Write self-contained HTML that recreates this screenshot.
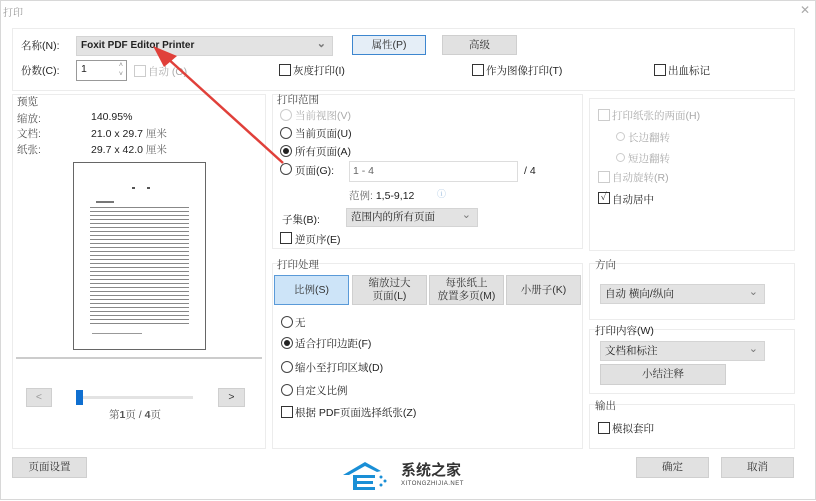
<!DOCTYPE html>
<html><head><meta charset="utf-8"><style>
*{margin:0;padding:0;box-sizing:border-box}
body{width:816px;height:500px;background:#fff;font-family:"Liberation Sans","Noto Serif CJK SC","Noto Sans CJK SC",sans-serif;font-size:10.5px;color:#222;position:relative;overflow:hidden;border:1px solid #d8d8d8}
.a{position:absolute;white-space:nowrap}
.p{position:absolute;border:1px solid #ececec;background:#fff}
.t{position:absolute;color:#444;font-size:10.5px}
.btn{position:absolute;background:#e1e1e1;border:1px solid #cfcfcf;text-align:center;color:#333}
.dd{position:absolute;background:#e3e3e3;border:1px solid #d4d4d4;padding-left:4px;color:#222}
.dd:after{content:"⌄";position:absolute;right:6px;top:-2px;color:#777;font-size:11px}
.cb{position:absolute;width:12px;height:12px;border:1px solid #333;background:#fff}
.rd{position:absolute;width:12px;height:12px;border:1px solid #444;border-radius:50%;background:#fff}
.rd.on:after{content:"";position:absolute;left:2px;top:2px;width:6px;height:6px;border-radius:50%;background:#222}
.dis{color:#b5b5b5;border-color:#ccc}
</style></head><body>
<div class="a" style="left:2px;top:3px;color:#999;font-size:10px">打印</div>
<div class="a" style="left:799px;top:2px;color:#aaa;font-size:12px">✕</div>

<div class="p" style="left:11px;top:27px;width:783px;height:63px"></div>
<div class="a" style="left:20px;top:37px">名称(N):</div>
<div class="dd" style="left:75px;top:35px;width:257px;height:20px;line-height:18px;font-weight:bold;font-size:10px">Foxit PDF Editor Printer</div>
<div class="btn" style="left:351px;top:34px;width:74px;height:20px;line-height:18px;border:1px solid #3d86cf;background:#e5eef7">属性(P)</div>
<div class="btn" style="left:441px;top:34px;width:75px;height:20px;line-height:18px">高级</div>
<div class="a" style="left:20px;top:62px">份数(C):</div>
<div class="a" style="left:75px;top:59px;width:51px;height:21px;border:1px solid #999;padding:2px 4px">1<span style="position:absolute;right:3px;top:0;font-size:7px;color:#888;line-height:9px">˄<br>˅</span></div>
<div class="cb dis" style="left:133px;top:64px"></div>
<div class="a" style="left:147px;top:63px;color:#aaa">自动   (O)</div>
<div class="cb" style="left:278px;top:63px"></div><div class="a" style="left:292px;top:62px">灰度打印(I)</div>
<div class="cb" style="left:471px;top:63px"></div><div class="a" style="left:485px;top:62px">作为图像打印(T)</div>
<div class="cb" style="left:653px;top:63px"></div><div class="a" style="left:667px;top:62px">出血标记</div>

<div class="p" style="left:11px;top:93px;width:254px;height:355px"></div>
<div class="t a" style="left:16px;top:93px">预览</div>
<div class="a" style="left:16px;top:110px;color:#555">缩放:</div><div class="a" style="left:90px;top:110px">140.95%</div>
<div class="a" style="left:16px;top:125px;color:#555">文档:</div><div class="a" style="left:90px;top:125px">21.0 x 29.7 <span style="color:#666">厘米</span></div>
<div class="a" style="left:16px;top:141px;color:#555">纸张:</div><div class="a" style="left:90px;top:141px">29.7 x 42.0 <span style="color:#666">厘米</span></div>
<div class="a" style="left:72px;top:161px;width:133px;height:188px;border:1px solid #666;background:#fff">
 <div class="a" style="left:58px;top:24px;width:18px;height:2px;border-left:3px solid #555;border-right:3px solid #555"></div>
 <div class="a" style="left:22px;top:38px;width:18px;height:2px;background:#777"></div>
 <div class="a" style="left:16px;top:44px;width:99px;height:118px;background:repeating-linear-gradient(#888 0 1.2px,#fff 1.2px 4px)"></div>
 <div class="a" style="left:18px;top:170px;width:50px;height:1px;background:#999"></div>
</div>
<div class="a" style="left:15px;top:356px;width:246px;height:2px;background:#ccc"></div>
<div class="btn" style="left:25px;top:387px;width:26px;height:19px;line-height:17px;color:#999">&lt;</div>
<div class="a" style="left:78px;top:395px;width:114px;height:3px;background:#e3e3e3"></div>
<div class="a" style="left:75px;top:389px;width:7px;height:15px;background:#0f6fd0"></div>
<div class="btn" style="left:217px;top:387px;width:27px;height:19px;line-height:17px">&gt;</div>
<div class="a" style="left:108px;top:406px;color:#555">第<b>1</b>页 / <b>4</b>页</div>

<div class="p" style="left:271px;top:93px;width:311px;height:155px"></div>
<div class="t a" style="left:276px;top:91px">打印范围</div>
<div class="rd dis" style="left:279px;top:108px"></div><div class="a" style="left:294px;top:107px;color:#aaa">当前视图(V)</div>
<div class="rd" style="left:279px;top:126px"></div><div class="a" style="left:294px;top:125px">当前页面(U)</div>
<div class="rd on" style="left:279px;top:144px"></div><div class="a" style="left:294px;top:143px">所有页面(A)</div>
<div class="rd" style="left:279px;top:162px"></div><div class="a" style="left:294px;top:162px">页面(G):</div>
<div class="a" style="left:348px;top:160px;width:169px;height:21px;border:1px solid #ddd;padding:3px 3px;color:#666">1 - 4</div>
<div class="a" style="left:523px;top:164px">/ 4</div>
<div class="a" style="left:348px;top:187px"><span style="color:#666">范例:</span> 1,5-9,12</div>
<div class="a" style="left:436px;top:186px;color:#9bd;font-size:9px">ⓘ</div>
<div class="a" style="left:281px;top:211px">子集(B):</div>
<div class="dd" style="left:345px;top:207px;width:132px;height:19px;line-height:17px">范围内的所有页面</div>
<div class="cb" style="left:279px;top:231px"></div><div class="a" style="left:294px;top:231px">逆页序(E)</div>

<div class="p" style="left:588px;top:97px;width:206px;height:153px"></div>
<div class="cb dis" style="left:597px;top:108px"></div><div class="a" style="left:611px;top:107px;color:#aaa">打印纸张的两面(H)</div>
<div class="rd dis" style="left:615px;top:131px;width:9px;height:9px"></div><div class="a" style="left:627px;top:129px;color:#aaa">长边翻转</div>
<div class="rd dis" style="left:615px;top:152px;width:9px;height:9px"></div><div class="a" style="left:627px;top:150px;color:#aaa">短边翻转</div>
<div class="cb dis" style="left:597px;top:170px"></div><div class="a" style="left:611px;top:169px;color:#aaa">自动旋转(R)</div>
<div class="cb" style="left:597px;top:191px;font-size:10px;line-height:9px;text-align:center">✓</div><div class="a" style="left:611px;top:191px">自动居中</div>

<div class="p" style="left:271px;top:262px;width:311px;height:186px"></div>
<div class="t a" style="left:276px;top:256px">打印处理</div>
<div class="btn" style="left:273px;top:274px;width:75px;height:30px;line-height:28px;background:#cde4f8;border:1px solid #5a9ad8">比例(S)</div>
<div class="btn" style="left:351px;top:274px;width:75px;height:30px;line-height:13px;padding-top:1px">缩放过大<br>页面(L)</div>
<div class="btn" style="left:428px;top:274px;width:75px;height:30px;line-height:13px;padding-top:1px">每张纸上<br>放置多页(M)</div>
<div class="btn" style="left:505px;top:274px;width:75px;height:30px;line-height:28px">小册子(K)</div>
<div class="rd" style="left:280px;top:315px"></div><div class="a" style="left:294px;top:314px">无</div>
<div class="rd on" style="left:280px;top:336px"></div><div class="a" style="left:294px;top:335px">适合打印边距(F)</div>
<div class="rd" style="left:280px;top:360px"></div><div class="a" style="left:294px;top:359px">缩小至打印区域(D)</div>
<div class="rd" style="left:280px;top:383px"></div><div class="a" style="left:294px;top:382px">自定义比例</div>
<div class="cb" style="left:280px;top:405px"></div><div class="a" style="left:294px;top:404px">根据 PDF页面选择纸张(Z)</div>

<div class="p" style="left:588px;top:262px;width:206px;height:57px"></div>
<div class="t a" style="left:594px;top:256px">方向</div>
<div class="dd" style="left:599px;top:283px;width:165px;height:20px;line-height:18px">自动 横向/纵向</div>
<div class="p" style="left:588px;top:328px;width:206px;height:65px"></div>
<div class="a" style="left:594px;top:322px">打印内容(W)</div>
<div class="dd" style="left:599px;top:340px;width:165px;height:20px;line-height:18px">文档和标注</div>
<div class="btn" style="left:599px;top:363px;width:126px;height:21px;line-height:19px">小结注释</div>
<div class="p" style="left:588px;top:403px;width:206px;height:45px"></div>
<div class="t a" style="left:594px;top:397px">输出</div>
<div class="cb" style="left:597px;top:421px"></div><div class="a" style="left:611px;top:420px">模拟套印</div>

<div class="btn" style="left:11px;top:456px;width:75px;height:21px;line-height:19px">页面设置</div>
<div class="btn" style="left:635px;top:456px;width:73px;height:21px;line-height:19px">确定</div>
<div class="btn" style="left:720px;top:456px;width:73px;height:21px;line-height:19px">取消</div>

<svg class="a" style="left:340px;top:458px" width="50" height="34" viewBox="0 0 50 34">
<path d="M2 16 L24 3 L40 12 L36 13 L24 7 L8 16 Z" fill="#1a8fd6"/>
<path d="M12 16 h22 v3 h-18 v3 h16 v3 h-16 v3 h18 v3 h-22 Z" fill="#1a8fd6"/>
<circle cx="40" cy="18" r="1.5" fill="#1a8fd6"/><circle cx="44" cy="22" r="1.5" fill="#1a8fd6"/><circle cx="40" cy="26" r="1.5" fill="#1a8fd6"/>
</svg>
<div class="a" style="left:400px;top:458px;font-size:15px;font-weight:bold;color:#333;font-family:'Noto Sans CJK SC',sans-serif">系统之家</div>
<div class="a" style="left:400px;top:480px;font-size:6px;color:#444;letter-spacing:0.5px">XITONGZHIJIA.NET</div>

<svg class="a" style="left:0;top:0" width="816" height="500">
<line x1="282" y1="162" x2="165" y2="56" stroke="#e0403a" stroke-width="2.5"/>
<path d="M152 45 L176 55 L163 66 Z" fill="#e0403a"/>
</svg>
</body></html>
